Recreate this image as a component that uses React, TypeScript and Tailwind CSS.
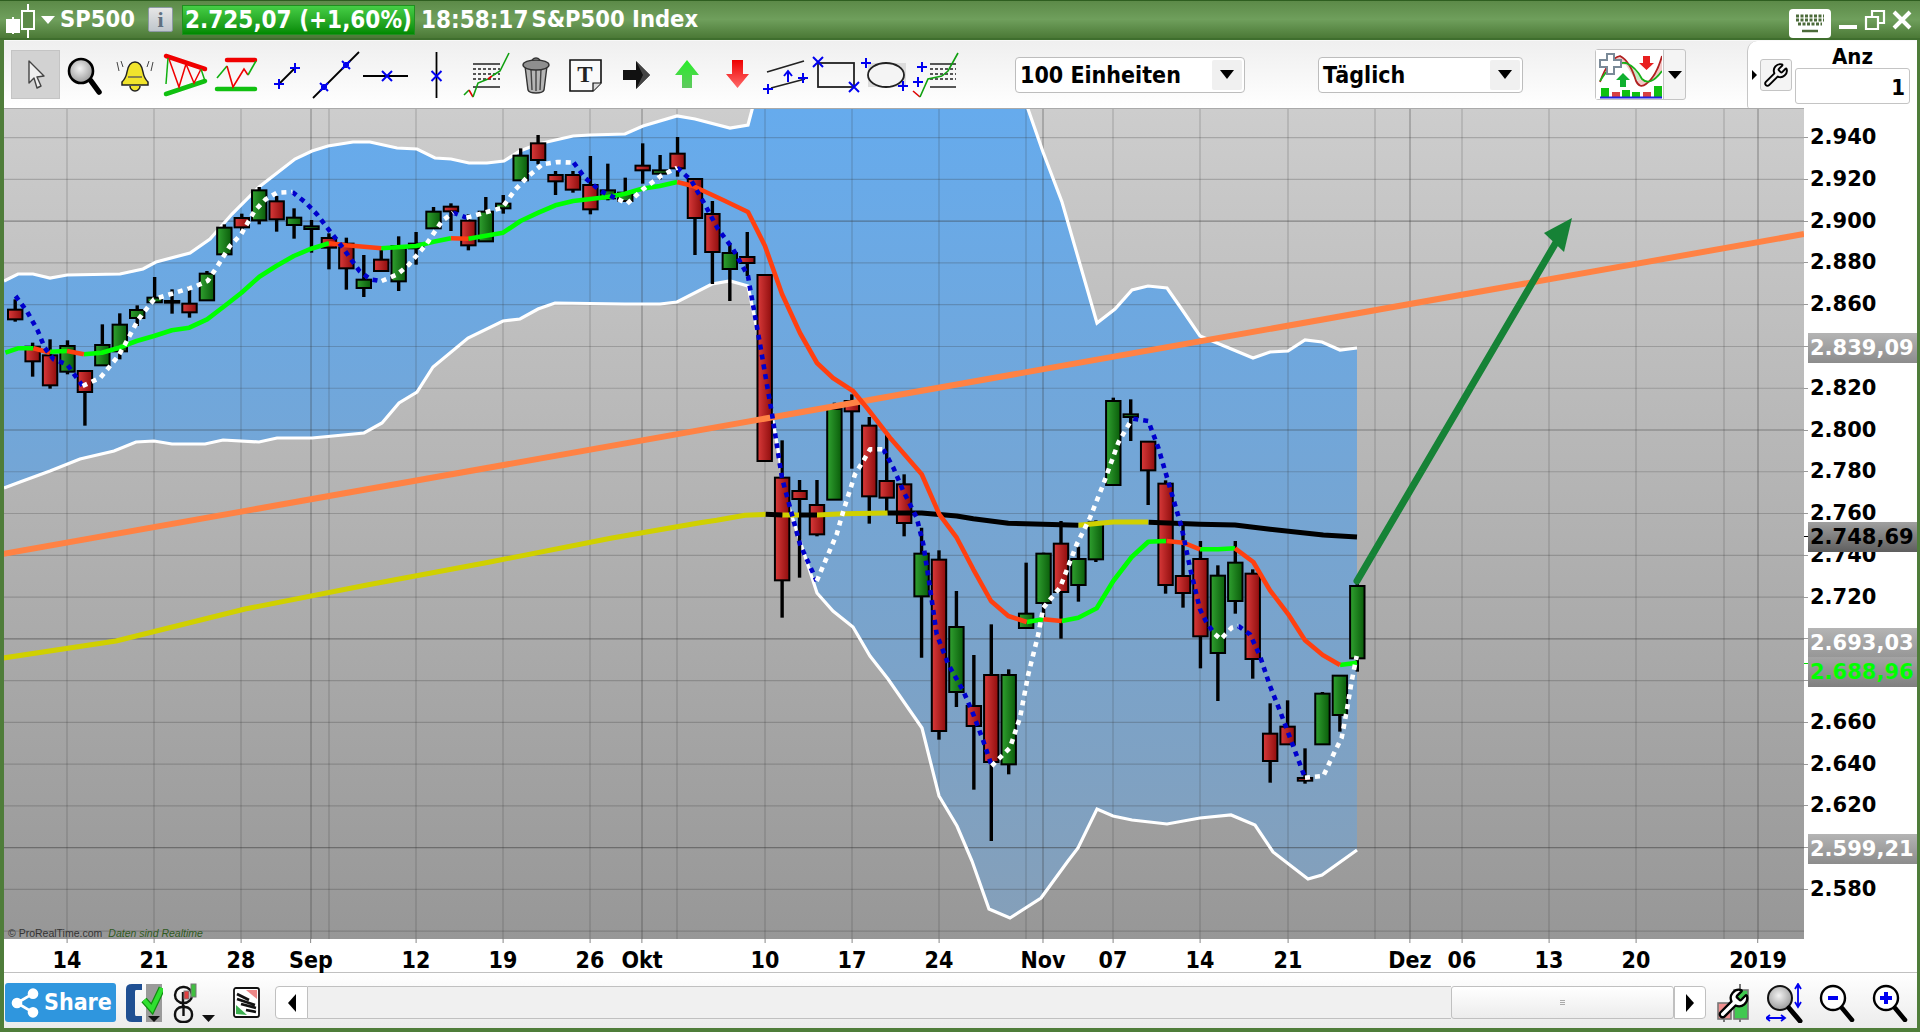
import { Share2, Wrench } from 'lucide-react';

const uiFont = "[font-family:'DejaVu_Sans_Condensed','DejaVu_Sans',sans-serif]";
const axisFont = "[font-family:'DejaVu_Sans',sans-serif]";

// price axis: 2.800 sits at y=321 inside the plot, 20 points = 41.76px
const priceY = (p: number) => 321 + ((2800 - p) * 41.76) / 20;

const x6 = (x: number) => +(x / 2.24).toFixed(1);
const pts6 = (a: number[]) => pairs(a, x6, (y) => 110 + y / 3);
const pts7 = (a: number[]) => pairs(a, (x) => 700 + x / 3, (y) => 380 + y / 3);
const pts8 = (a: number[]) => pairs(a, (x) => 1100 + x / 3, (y) => 380 + y / 3);
function pairs(a: number[], fx: (n: number) => number, fy: (n: number) => number) {
  const out: string[] = [];
  for (let i = 0; i < a.length; i += 2) out.push(`${+fx(a[i]).toFixed(1)},${+fy(a[i + 1]).toFixed(1)}`);
  return out.join(' ');
}

type C = [number, 'r' | 'g', number, number, number, number];
const scale = (rows: C[], base: number): C[] =>
  rows.map(([i, c, a, b, d, e]) => [i, c, base + a / 3, base + b / 3, base + d / 3, base + e / 3]);

const candles: C[] = [
  ...scale([
    [0, 'r', 565, 596, 625, 632], [1, 'r', 695, 707, 751, 797], [2, 'r', 685, 733, 823, 833], [3, 'g', 688, 705, 782, 790],
    [4, 'r', 780, 780, 843, 944], [5, 'g', 640, 702, 763, 765], [6, 'g', 607, 641, 721, 745], [7, 'g', 583, 597, 621, 645],
    [8, 'g', 498, 560, 574, 575], [9, 'g', 535, 570, 575, 608], [10, 'r', 525, 578, 604, 620], [11, 'g', 480, 488, 568, 570],
    [12, 'g', 340, 350, 430, 432], [13, 'r', 308, 321, 349, 362], [14, 'g', 228, 238, 328, 340], [15, 'r', 255, 271, 325, 362],
    [16, 'g', 292, 320, 342, 383], [17, 'g', 327, 346, 354, 425], [18, 'r', 367, 381, 410, 475], [19, 'r', 380, 398, 472, 536],
    [20, 'g', 432, 506, 531, 558], [21, 'r', 417, 446, 480, 482], [22, 'g', 376, 405, 511, 540], [23, 'g', 363, 398, 412, 461],
    [24, 'g', 288, 302, 352, 352], [25, 'r', 277, 287, 301, 360], [26, 'r', 310, 329, 403, 418], [27, 'g', 258, 302, 391, 392],
    [28, 'g', 252, 278, 292, 308], [29, 'g', 112, 134, 208, 208], [30, 'r', 72, 97, 147, 160], [31, 'r', 180, 192, 211, 252],
    [32, 'r', 180, 192, 236, 245], [33, 'r', 135, 222, 295, 310], [34, 'g', 158, 238, 262, 268], [35, 'g', 200, 245, 270, 272],
    [36, 'r', 97, 164, 178, 218], [37, 'g', 132, 178, 188, 205], [38, 'r', 78, 128, 172, 197],
  ], 110),
  [39, 'r', 178, 178, 217, 254], [40, 'r', 200, 213, 251, 283], [41, 'g', 242, 252, 268, 300], [42, 'r', 231, 256, 262, 275],
  ...scale([
    [43, 'r', -318, -318, 240, 240], [44, 'r', 178, 290, 598, 710], [45, 'r', 297, 330, 354, 590], [46, 'r', 297, 372, 460, 466],
    [47, 'g', 65, 84, 356, 356], [48, 'r', 40, 60, 91, 263], [49, 'r', 108, 134, 346, 428], [50, 'r', 160, 300, 350, 395],
    [51, 'r', 280, 310, 426, 466], [52, 'g', 440, 518, 646, 830], [53, 'r', 508, 536, 1050, 1076], [54, 'g', 630, 738, 933, 978],
    [55, 'r', 822, 975, 1035, 1226], [56, 'r', 730, 882, 1143, 1380], [57, 'g', 865, 882, 1150, 1180], [58, 'g', 545, 698, 741, 742],
    [59, 'g', 515, 518, 666, 710], [60, 'r', 420, 488, 633, 773], [61, 'g', 497, 534, 612, 662], [62, 'g', 418, 424, 535, 543],
    [63, 'g', 50, 60, 312, 312], [64, 'g', 55, 100, 108, 180], [65, 'r', 182, 182, 268, 372], [66, 'r', 298, 308, 612, 638],
    [67, 'r', 430, 585, 636, 680], [68, 'r', 480, 534, 766, 862], [69, 'g', 553, 584, 816, 960], [70, 'g', 480, 545, 660, 698],
    [71, 'r', 565, 578, 834, 893], [72, 'r', 967, 1058, 1140, 1205], [73, 'r', 958, 1037, 1090, 1090], [74, 'r', 1102, 1191, 1199, 1208],
    [75, 'g', 933, 938, 1090, 1090], [76, 'g', 884, 884, 1002, 1052], [77, 'g', 608, 615, 832, 872],
  ], 380),
];

const upperBand = '4,280 18,273 33,273 50,277 67,274 120,273 143,268 156,261 190,252 210,238 232,213 259,186 295,158 312,150 328,145 353,141 370,141 397,147 417,148 435,157 451,158 469,162 487,162 504,160 520,150 538,143 573,135 590,134 625,133 643,125 677,115 695,118 730,127 748,124 753,105 1027,105 1028,108 1043,151 1062,201 1097,322 1115,308 1132,289 1148,285 1167,287 1183,310 1200,335 1253,357 1270,351 1288,350 1305,339 1322,341 1340,349 1357,347';
const lowerBand = '4,487 20,481 50,470 80,458 114,450 136,441 154,440 172,443 205,443 223,439 259,441 277,437 312,437 364,432 382,422 399,402 417,391 433,366 468,337 503,320 520,318 538,308 555,302 625,303 660,303 677,301 712,283 730,280 748,285 760,343 773,420 787,500 817,592 833,610 853,626 870,655 888,678 922,727 939,795 957,825 972,860 989,908 1010,917 1041,897 1068,860 1078,847 1097,808 1113,815 1132,819 1167,823 1200,817 1231,814 1255,824 1273,851 1308,878 1322,874 1357,849';
const bandFill = `${upperBand} ${lowerBand.split(' ').reverse().join(' ')}`;

const maGreen = [
  pts6([12, 725, 40, 712, 75, 712]), pts6([112, 722, 150, 720]),
  pts6([188, 730, 228, 725, 267, 710, 306, 690, 345, 675, 385, 658, 424, 650, 464, 625, 503, 585, 541, 545, 581, 497, 619, 465, 658, 435, 697, 413, 737, 397]),
  pts6([854, 412, 932, 405, 971, 392, 1010, 382]),
  pts6([1049, 383, 1127, 365, 1166, 330, 1206, 305, 1244, 283, 1284, 270, 1361, 258, 1400, 248, 1438, 233, 1478, 225, 1517, 213]),
  pts7([980, 723, 1030, 715]),
  pts7([1085, 720, 1135, 710, 1190, 682, 1240, 600, 1295, 528, 1345, 482, 1398, 480]),
  pts8([300, 505, 354, 505, 405, 502]), pts8([720, 852, 771, 845]),
];
const maRed = [
  pts6([75, 712, 112, 725]), pts6([150, 720, 188, 730]), pts6([737, 397, 776, 403, 854, 412]), pts6([1010, 382, 1049, 383]),
  `${pts6([1517, 213])} 693,185 723,199 748,211 765,245 782,293 800,332 817,362 833,377 853,390 867,407 ${pts7([570, 170, 665, 280, 718, 400, 770, 470, 820, 565, 873, 660, 925, 705, 980, 723])}`,
  pts7([1030, 715, 1085, 720]),
  pts8([200, 480, 250, 485, 300, 505]),
  pts8([405, 502, 460, 543, 510, 628, 565, 700, 615, 778, 668, 822, 720, 852]),
];
const longYellow = [
  `3,657 116,640 245,608 367,584 490,561 612,537 ${pts7([0, 425, 50, 418, 135, 403, 197, 400])}`,
  pts7([247, 402, 297, 402]), pts7([351, 402, 430, 398, 563, 396]), pts7([1135, 433, 1240, 423, 1345, 423]),
];
const longBlack = [
  pts7([197, 400, 247, 402]), pts7([297, 402, 351, 402]),
  pts7([563, 396, 665, 396, 770, 405, 820, 413, 925, 427, 1030, 430, 1135, 433]),
  pts8([146, 424, 300, 430, 405, 432, 510, 445, 670, 462, 771, 468]),
];
const dashWhite = [
  pts6([185, 825, 225, 800, 265, 735, 280, 700, 310, 625, 345, 565, 385, 548, 410, 538, 440, 525, 465, 510, 485, 470, 515, 405, 540, 370, 570, 300, 595, 265, 620, 245, 655, 243]),
  pts6([855, 510, 890, 490, 915, 462, 955, 400, 990, 330, 1015, 305]),
  pts6([1045, 320, 1085, 305, 1125, 290, 1155, 235, 1180, 200, 1215, 160, 1250, 153, 1285, 155]),
  pts6([1385, 265, 1405, 278, 1440, 235, 1480, 195, 1517, 170]),
  pts7([350, 600, 380, 530, 410, 460, 430, 390, 465, 280, 490, 240, 510, 205, 550, 205]),
  pts7([875, 1155, 930, 1100, 960, 1010, 985, 880, 1015, 760, 1030, 680, 1080, 620, 1130, 490, 1170, 410, 1210, 310, 1255, 185, 1295, 115]),
  pts8([345, 760, 362, 775, 395, 740, 415, 735]),
  pts8([615, 1190, 670, 1185, 705, 1110, 725, 1070, 740, 990, 755, 900, 770, 825]),
];
const dashBlue = [
  pts6([35, 555, 60, 600, 85, 660, 100, 710, 120, 745, 150, 760, 185, 825]),
  pts6([655, 243, 685, 275, 710, 310, 730, 345, 765, 405, 805, 480, 830, 505, 850, 510]),
  pts6([1015, 305, 1045, 320]),
  pts6([1285, 155, 1310, 200, 1345, 240, 1385, 265]),
  `${pts6([1517, 170, 1548, 208])} 704,202 718,228 733,248 748,275 750,287 760,343 772,413 782,477 ${pts7([300, 490, 350, 600])}`,
  pts7([550, 205, 580, 260, 610, 330, 650, 410, 670, 490, 690, 620, 710, 760, 745, 850, 790, 930, 820, 1000, 850, 1080, 875, 1155]),
  pts8([100, 113, 145, 120, 175, 200, 210, 320, 245, 440, 270, 560, 300, 685, 320, 725, 345, 760]),
  pts8([415, 735, 450, 760, 480, 825, 510, 915, 540, 990, 570, 1070, 600, 1150, 615, 1190]),
];

const gridX = [67, 154, 241, 311, 329, 416, 503, 590, 642, 677, 765, 852, 939, 1026, 1043, 1113, 1200, 1288, 1375, 1410, 1462, 1549, 1636, 1724, 1758];
const monthX = [311, 642, 1043, 1410, 1758];
const prices = Array.from({ length: 21 }, (_, i) => 2540 + i * 20);
const axisPrices = prices.filter((p) => p >= 2580 && p <= 2940);
const dates: [string, number][] = [
  ['14', 67], ['21', 154], ['28', 241], ['Sep', 311], ['12', 416], ['19', 503], ['26', 590], ['Okt', 642], ['10', 765], ['17', 852],
  ['24', 939], ['Nov', 1043], ['07', 1113], ['14', 1200], ['21', 1288], ['Dez', 1410], ['06', 1462], ['13', 1549], ['20', 1636], ['2019', 1758],
];

function Lines({ items, stroke, width, dash, cap }: { items: string[]; stroke: string; width: number; dash?: string; cap?: 'round' }) {
  return (
    <>
      {items.map((p, i) => (
        <polyline key={i} points={p} fill="none" stroke={stroke} strokeWidth={width} strokeDasharray={dash} strokeLinejoin="round" strokeLinecap={cap} />
      ))}
    </>
  );
}

function Chart() {
  return (
    <svg viewBox="4 108 1800 831" className="block w-[1800px] h-[831px]">
      <defs>
        <linearGradient id="band" gradientUnits="userSpaceOnUse" x1="0" y1="108" x2="0" y2="939">
          <stop offset="0" stopColor="#66abed" />
          <stop offset="1" stopColor="#859fb8" />
        </linearGradient>
        <linearGradient id="red" x1="0" x2="1" y1="0" y2="0">
          <stop offset="0" stopColor="#d93a3a" />
          <stop offset="1" stopColor="#8f0d0d" />
        </linearGradient>
        <linearGradient id="green" x1="0" x2="1" y1="0" y2="0">
          <stop offset="0" stopColor="#30a130" />
          <stop offset="1" stopColor="#0a5c0a" />
        </linearGradient>
      </defs>
      <polygon points={bandFill} fill="url(#band)" />
      {gridX.map((x) => (
        <line key={x} x1={x} x2={x} y1={108} y2={939} stroke="#333" strokeOpacity={monthX.includes(x) ? 0.4 : 0.24} strokeWidth={1.2} />
      ))}
      {prices.map((p) => (
        <line key={p} x1={4} x2={1804} y1={priceY(p) + 108} y2={priceY(p) + 108} stroke="#333" strokeOpacity={p % 100 === 0 ? 0.45 : 0.24} strokeWidth={1.2} />
      ))}
      <polyline points={upperBand} fill="none" stroke="#fff" strokeWidth={3.2} />
      <polyline points={lowerBand} fill="none" stroke="#fff" strokeWidth={3.2} />
      {candles.map(([i, c, wt, bt, bb, wb]) => {
        const x = 15.2 + 17.43 * i;
        return (
          <g key={i}>
            <line x1={x} x2={x} y1={wt} y2={wb} stroke="#000" strokeWidth={3.4} />
            <rect x={x - 7.2} y={bt} width={14.4} height={bb - bt} fill={c === 'r' ? 'url(#red)' : 'url(#green)'} stroke="#000" strokeWidth={2} />
          </g>
        );
      })}
      <Lines items={longYellow} stroke="#d0d000" width={5} />
      <Lines items={longBlack} stroke="#000" width={5} />
      <line x1={3} y1={553} x2={1804} y2={233} stroke="#ff8244" strokeWidth={6} />
      <Lines items={maGreen} stroke="#00ff00" width={4.6} />
      <Lines items={maRed} stroke="#ff4010" width={4.6} />
      <Lines items={dashBlue} stroke="#0000cc" width={4.6} dash="5 5" />
      <Lines items={dashWhite} stroke="#fff" width={4.6} dash="5 5" />
      <line x1={1357} y1={580} x2={1558} y2={238} stroke="#168236" strokeWidth={7} strokeLinecap="round" />
      <polygon points="1572,217 1544,232 1564,251" fill="#168236" />
    </svg>
  );
}

function Plus({ x, y, r = 5 }: { x: number; y: number; r?: number }) {
  return <path d={`M${x - r} ${y}H${x + r}M${x} ${y - r}V${y + r}`} stroke="#0000f0" strokeWidth={2} fill="none" />;
}
function Cross({ x, y, r = 5 }: { x: number; y: number; r?: number }) {
  return <path d={`M${x - r} ${y - r}L${x + r} ${y + r}M${x - r} ${y + r}L${x + r} ${y - r}`} stroke="#0000f0" strokeWidth={2} fill="none" />;
}
function TableLines({ x, w }: { x: number; w: number }) {
  return (
    <g stroke="#222" strokeWidth={1.6}>
      <path d={`M${x} 14H${x + w}M${x} 37H${x + w}`} />
      <path d={`M${x} 19H${x + w}M${x} 24H${x + w}M${x} 29H${x + w}`} strokeDasharray="3 2" />
    </g>
  );
}
function Icon({ w, ml, children }: { w: number; ml: number; children: React.ReactNode }) {
  return (
    <svg viewBox={`0 0 ${w} 50`} width={w} height={50} style={{ marginLeft: ml }} className="shrink-0 overflow-visible">
      {children}
    </svg>
  );
}

function Glass({ r = 12, fill = 'url(#glass)' }: { r?: number; fill?: string }) {
  return <circle cx={14} cy={21} r={r} fill={fill} stroke="#000" strokeWidth={2.6} />;
}

function ToolIcons() {
  return (
    <>
      <svg width="0" height="0" className="absolute">
        <defs>
          <radialGradient id="glass" cx="0.45" cy="0.4" r="0.7">
            <stop offset="0" stopColor="#f2f2f2" />
            <stop offset="1" stopColor="#8d8d8d" />
          </radialGradient>
          <linearGradient id="upArrow" x1="0" x2="0" y1="0" y2="1">
            <stop offset="0" stopColor="#28ee28" />
            <stop offset="1" stopColor="#60c860" />
          </linearGradient>
          <linearGradient id="downArrow" x1="0" x2="0" y1="0" y2="1">
            <stop offset="0" stopColor="#ee0000" />
            <stop offset="1" stopColor="#ff6a6a" />
          </linearGradient>
        </defs>
      </svg>
      <Icon w={35} ml={7}>
        <Glass />
        <path d="M24 31L32 42" stroke="#000" strokeWidth={5.5} strokeLinecap="round" />
      </Icon>
      <Icon w={38} ml={14}>
        <path d="M19 12c-5 0-7 4-8 10-1 6-3 8-5 10v3h26v-3c-2-2-4-4-5-10-1-6-3-10-8-10z" fill="#f1e42c" stroke="#222" strokeWidth={1.5} />
        <path d="M14 36a5 5 0 0 0 10 0" fill="#f1e42c" stroke="#222" strokeWidth={1.5} />
        <path d="M12 27H26" stroke="#665" strokeWidth={1.5} />
        <path d="M1 12l2 9M5 11l2 6M37 12l-2 9M33 11l-2 6" stroke="#444" strokeWidth={1} fill="none" />
      </Icon>
      <Icon w={41} ml={11}>
        <path d="M1 6L40 19" stroke="#f00000" strokeWidth={4.5} strokeLinecap="round" />
        <path d="M1 44L40 31" stroke="#10c010" strokeWidth={4.5} strokeLinecap="round" />
        <path d="M1 34L3 8" stroke="#10b010" strokeWidth={1.5} />
        <path d="M4 9L14 37L21 14L29 33L36 19" stroke="#f00000" strokeWidth={1.5} fill="none" />
        <path d="M36 19L40 31" stroke="#10b010" strokeWidth={1.5} />
      </Icon>
      <Icon w={42} ml={9}>
        <path d="M12 10H40" stroke="#f00000" strokeWidth={4.5} strokeLinecap="round" />
        <path d="M2 39H40" stroke="#10c010" strokeWidth={4.5} strokeLinecap="round" />
        <path d="M2 28L12 16" stroke="#10b010" strokeWidth={1.6} fill="none" />
        <path d="M12 16L18 37L29 19L33 25" stroke="#f00000" strokeWidth={1.6} fill="none" />
        <path d="M33 25L41 11" stroke="#10b010" strokeWidth={1.6} fill="none" />
      </Icon>
      <Icon w={27} ml={16}>
        <path d="M6 34L22 18" stroke="#000" strokeWidth={1.8} />
        <Plus x={6} y={34} />
        <Plus x={22} y={18} />
      </Icon>
      <Icon w={46} ml={13}>
        <path d="M0 48L46 2" stroke="#000" strokeWidth={1.8} />
        <Cross x={11} y={37} r={4} />
        <Plus x={11} y={37} r={3} />
        <Cross x={33} y={15} r={4} />
        <Plus x={33} y={15} r={3} />
      </Icon>
      <Icon w={45} ml={4}>
        <path d="M0 26H45" stroke="#000" strokeWidth={1.8} />
        <Cross x={24} y={26} />
      </Icon>
      <Icon w={25} ml={16}>
        <path d="M12.500 2V48" stroke="#000" strokeWidth={1.8} />
        <Cross x={12.5} y={26} />
      </Icon>
      <Icon w={46} ml={14}>
        <TableLines x={10} w={27} />
        <path d="M1 45L6 40" stroke="#10a010" strokeWidth={1.6} fill="none" />
        <path d="M6 40L10 47" stroke="#e00000" strokeWidth={1.6} fill="none" />
        <path d="M10 47L15 33L25 29" stroke="#10a010" strokeWidth={1.6} fill="none" />
        <path d="M25 29L29 26" stroke="#e00000" strokeWidth={1.6} fill="none" />
        <path d="M29 26L37 21L46 3" stroke="#10a010" strokeWidth={1.6} fill="none" />
      </Icon>
      <Icon w={30} ml={12}>
        <path d="M4 16L7 40Q8 43 15 43Q22 43 23 40L26 16Z" fill="#b5b5b5" stroke="#333" strokeWidth={1.4} />
        <path d="M10 19L11 40M15 19V41M20 19L19 40" stroke="#444" strokeWidth={1.4} />
        <ellipse cx={15} cy={15} rx={13} ry={5} fill="#8f8f8f" stroke="#333" strokeWidth={1.4} />
        <path d="M11 10q4-4 8 0" fill="none" stroke="#333" strokeWidth={1.5} />
      </Icon>
      <Icon w={33} ml={18}>
        <path d="M1 10H32V33L24 41H1Z" fill="#fafafa" stroke="#111" strokeWidth={1.6} />
        <path d="M32 33H24V41" fill="#ddd" stroke="#111" strokeWidth={1.2} />
        <text x={16} y={32} textAnchor="middle" fontSize={23} fontWeight={700} fontFamily="'Liberation Serif', serif" fill="#222">T</text>
      </Icon>
      <Icon w={27} ml={21}>
        <path d="M0 20H13V11L27 25L13 39V30H0Z" fill="#111" />
        <path d="M13 11L27 25L13 39L20 25Z" fill="#444" />
      </Icon>
      <Icon w={24} ml={25}>
        <path d="M12 10L24 25H17V38H7V25H0Z" fill="url(#upArrow)" />
      </Icon>
      <Icon w={23} ml={27}>
        <path d="M6 10H17V24H23L11.500 38L0 24H6Z" fill="url(#downArrow)" />
      </Icon>
      <Icon w={47} ml={13}>
        <path d="M5 22L42 11M9 38L43 29" stroke="#222" strokeWidth={1.8} />
        <Plus x={6} y={39} />
        <Plus x={41} y={28} />
        <path d="M26 32V22M22 26L26 21L30 26" stroke="#0000f0" strokeWidth={2} fill="none" />
      </Icon>
      <Icon w={46} ml={4}>
        <rect x={5} y={13} width={36} height={24} fill="none" stroke="#222" strokeWidth={1.8} />
        <Cross x={5} y={12} />
        <Cross x={41} y={37} />
      </Icon>
      <Icon w={47} ml={3}>
        <rect x={6} y={13} width={38} height={24} fill="#dcdcdc" />
        <ellipse cx={24} cy={25} rx={18} ry={12} fill="#f4f4f4" stroke="#222" strokeWidth={1.8} />
        <Plus x={4} y={13} />
        <Plus x={41} y={36} />
      </Icon>
      <Icon w={45} ml={4}>
        <TableLines x={17} w={26} />
        <path d="M0 41L7 47" stroke="#e00000" strokeWidth={1.6} fill="none" />
        <path d="M7 47L15 29L29 26" stroke="#10a010" strokeWidth={1.6} fill="none" />
        <path d="M29 26L35 21L45 3" stroke="#10a010" strokeWidth={1.6} fill="none" />
        <Plus x={9} y={17} />
        <Plus x={5} y={32} />
      </Icon>
    </>
  );
}

function Select({ label, w, ml }: { label: string; w: number; ml: number }) {
  return (
    <div style={{ marginLeft: ml, width: w }} className="h-9 shrink-0 flex items-center bg-white border border-[#bdbdbd] rounded-[4px] pl-[4px] pr-[2px]">
      <span className={`${uiFont} font-bold text-[23px] leading-none text-black grow pt-[2px]`}>{label}</span>
      <span className="w-[30px] h-[30px] bg-[#f0f0f0] rounded-[2px] flex items-center justify-center">
        <span className="w-0 h-0 border-x-[7px] border-x-transparent border-t-[9px] border-t-black" />
      </span>
    </div>
  );
}

function Toolbar() {
  return (
    <div className="h-[68px] shrink-0 flex items-center bg-linear-to-b from-[#efefef] to-white relative border-t border-[#f8f8f8]">
      <div className="ml-[7px] w-[49px] h-[49px] shrink-0 bg-[#d2d2d2] border border-[#c4c4c4] flex items-center justify-center">
        <svg viewBox="0 0 20 32" width="20" height="32">
          <path d="M3 2V24L8 19L11 29L15 27L11 18L18 17Z" fill="#efefef" stroke="#444" strokeWidth={1.4} strokeLinejoin="round" />
        </svg>
      </div>
      <ToolIcons />
      <Select label="100 Einheiten" w={230} ml={57} />
      <Select label="Täglich" w={205} ml={73} />
      <div className="ml-[72px] w-[91px] h-[51px] shrink-0 flex bg-[#f4f4f4] border border-[#c4c4c4] rounded-[3px]">
        <div className="w-[68px] bg-white border-r border-[#c4c4c4] flex items-center justify-center">
          <svg viewBox="0 0 64 48" width="64" height="48">
            <path d="M2 31Q10 8 22 5Q32 10 38 30L28 14Q14 10 2 30Z" fill="#f3c8c8" />
            <path d="M38 30Q42 38 48 33Q58 26 64 5V20Q52 36 44 28Z" fill="#f3c8c8" />
            <path d="M30 14Q38 16 44 28L38 30Z" fill="#c4e8c4" />
            <path d="M2 31Q10 8 22 5Q32 10 38 30Q42 38 48 33Q58 26 64 5" fill="none" stroke="#b02020" strokeWidth={1.8} />
            <path d="M2 30Q14 10 28 12Q38 16 44 28Q52 36 64 20" fill="none" stroke="#18b018" strokeWidth={1.8} />
            <path d="M9 3H16V9H23V16H16V23H9V16H2V9H9Z" fill="#fff" stroke="#7a8a98" strokeWidth={2} />
            <path d="M45 5H52V12H56L48.500 19L41 12H45Z" fill="#e82020" />
            <path d="M25 22L32 29H28V36H22V29H18Z" fill="#10b030" />
            <path d="M3 37H11V46H3ZM24 39H32V46H24ZM34 41H42V46H34ZM56 35H64V46H56Z" fill="#10c010" />
            <path d="M14 41H22V46H14ZM45 41H53V46H45Z" fill="#d84040" />
            <path d="M2 46.500H64" stroke="#2020e0" strokeWidth={1.8} />
          </svg>
        </div>
        <div className="grow flex items-center justify-center">
          <span className="w-0 h-0 border-x-[7px] border-x-transparent border-t-[8px] border-t-black" />
        </div>
      </div>
      <div className="ml-[61px] w-[170px] h-[68px] shrink-0 bg-white rounded-tl-[10px] rounded-bl-[4px] border-l border-[#c6c6c6] flex items-center pl-[4px]">
        <span className="w-0 h-0 border-y-[5px] border-y-transparent border-l-[5px] border-l-black" />
        <span className="ml-[3px] w-8 h-8 bg-[#f4f4f4] border border-[#c4c4c4] rounded-[3px] flex items-center justify-center">
          <Wrench size={26} strokeWidth={1.8} className="text-black" />
        </span>
        <div className="ml-[3px] w-[115px] flex flex-col items-center">
          <span className={`${uiFont} font-bold text-[22px] leading-[22px] text-black`}>Anz</span>
          <div className={`${uiFont} font-bold text-[22px] leading-[38px] text-black w-full h-9 border border-[#c4c4c4] rounded-[3px] text-right pr-[4px]`}>1</div>
        </div>
      </div>
    </div>
  );
}

function TitleBar() {
  return (
    <div className={`h-10 shrink-0 flex items-center bg-linear-to-b from-[#5c8a48] via-[#6f9f5c] to-[#4b7936] border-t border-[#2e5e20] border-b-2 border-b-[#3f6e2e] relative ${uiFont} font-bold text-white`}>
      <svg viewBox="0 0 36 36" width="36" height="36" className="ml-[2px] shrink-0">
        <path d="M11 15V32M26 2V36" stroke="#fff" strokeWidth={2} />
        <rect x={4} y={17} width={14} height={14} fill="#fff" />
        <rect x={20} y={9} width={12} height={18} fill="#5c8a48" stroke="#fff" strokeWidth={2} />
      </svg>
      <span className="ml-[3px] w-0 h-0 border-x-[7px] border-x-transparent border-t-[8px] border-t-white" />
      <span className="ml-[5px] w-[88px] shrink-0 text-[23.5px] leading-none">SP500</span>
      <span className="w-[25px] h-[25px] shrink-0 rounded-[2px] bg-linear-to-b from-[#e6e6e6] to-[#bfc6cc] border border-[#8d9aa5] flex items-center justify-center text-[#5f7080] text-[22px] font-bold leading-none [font-family:'Liberation_Serif',serif]">i</span>
      <span className="ml-[9px] w-[233px] h-[30px] shrink-0 bg-linear-to-b from-[#45cf45] to-[#008a00] border border-[#1f8f1f] flex items-center justify-center text-[24px] leading-none whitespace-nowrap">2.725,07 (+1,60%)</span>
      <span className="ml-[6px] text-[24px] leading-none">18:58:17</span>
      <span className="ml-[3px] text-[23.5px] leading-none">S&amp;P500 Index</span>
      <div className="ml-auto flex items-center pr-[8px]">
        <div className="w-[42px] h-[29px] bg-white rounded-[4px] flex items-center justify-center mt-[8px]">
          <svg viewBox="0 0 34 22" width="34" height="22">
            <path d="M3 3h28M3 7h28M5 11h24" stroke="#4c6b3a" strokeWidth={3} strokeDasharray="3 1.500" />
            <path d="M9 18H25" stroke="#4c6b3a" strokeWidth={2.500} />
          </svg>
        </div>
        <svg viewBox="0 0 73 24" width="73" height="24" className="ml-[8px]">
          <path d="M0 19H18" stroke="#fff" strokeWidth={4} />
          <path d="M27 9H39V21H27ZM33 9V3H45V15H39" fill="none" stroke="#fff" strokeWidth={2.200} />
          <path d="M55 4L71 20M71 4L55 20" stroke="#fff" strokeWidth={4} />
        </svg>
      </div>
    </div>
  );
}

function Badge({ price, top, text, bg }: { price: string; top: number; text: string; bg: string }) {
  return (
    <div style={{ top }} className={`absolute left-[4px] right-0 h-[30px] flex items-center pl-[2px] text-[21px] font-bold leading-none ${axisFont} ${text} ${bg}`}>
      {price}
    </div>
  );
}

function PriceAxis() {
  return (
    <div className={`relative w-[113px] h-[831px] shrink-0 bg-white overflow-hidden ${axisFont}`}>
      {axisPrices.map((p) => (
        <div key={p} style={{ top: priceY(p) - 14 }} className="absolute left-0 flex items-center h-[30px]">
          <span className="w-[4px] h-px bg-[#999]" />
          <span className="ml-[2px] text-[21px] leading-none font-bold text-black">{`2.${p - 2000}`}</span>
        </div>
      ))}
      <Badge price="2.839,09" top={225} text="text-white" bg="bg-linear-to-b from-[#b4b4b4] to-[#8c8c8c]" />
      <Badge price="2.748,69" top={414} text="text-black" bg="bg-linear-to-b from-[#a0a0a0] to-[#5e5e5e]" />
      <Badge price="2.693,03" top={520} text="text-white" bg="bg-linear-to-b from-[#b4b4b4] to-[#969696]" />
      <Badge price="2.688,96" top={549} text="text-[#00ff00]" bg="bg-linear-to-b from-[#a4a4a4] to-[#808080]" />
      <Badge price="2.599,21" top={726} text="text-white" bg="bg-linear-to-b from-[#b4b4b4] to-[#8c8c8c]" />
      <span className="absolute left-0 top-[428px] w-[4px] h-px bg-black" />
      <span className="absolute left-0 top-[555px] w-[4px] h-px bg-[#00e000]" />
    </div>
  );
}

function DateAxis() {
  return (
    <div className={`relative h-[34px] shrink-0 bg-white border-b border-[#c0c0c0] ${uiFont}`}>
      {dates.map(([label, x]) => (
        <div key={`${label}${x}`} style={{ left: x - 4 }} className="absolute top-0 -translate-x-1/2 flex flex-col items-center">
          <span className="w-px h-[4px] bg-[#888]" />
          <span className="text-[23px] leading-[26px] mt-[4px] font-bold text-black">{label}</span>
        </div>
      ))}
    </div>
  );
}

function BottomBar() {
  return (
    <div className="h-[55px] shrink-0 flex items-center pt-[4px] bg-linear-to-b from-white to-[#ececec]">
      <div className={`ml-px w-[111px] h-[39px] shrink-0 rounded-[3px] bg-[#2f96de] flex items-center pl-[4px] text-white font-bold text-[23px] ${uiFont}`}>
        <Share2 size={32} fill="#fff" strokeWidth={2} className="shrink-0" />
        <span className="ml-[3px] leading-none">Share</span>
      </div>
      <svg viewBox="0 0 38 40" width="38" height="40" className="ml-[9px] shrink-0">
        <path d="M17 1H7Q1 1 1 6V34Q1 39 7 39H17V33H11Q10 33 10 31V9Q10 7 11 7H17Z" fill="#1f4f92" />
        <rect x={21} y={1} width={16} height={38} fill="#9a9a9a" />
        <path d="M19 17L27 26L37 5" fill="none" stroke="#108a10" strokeWidth={7} />
        <path d="M19 17L27 26L37 5" fill="none" stroke="#30e030" strokeWidth={4.5} />
        <path d="M23 33H35L29 39Z" fill="#111" />
      </svg>
      <svg viewBox="0 0 42 40" width="42" height="40" className="ml-[10px] shrink-0">
        <rect x={2} y={4} width={17} height={16} rx={8} fill="none" stroke="#111" strokeWidth={2.4} />
        <path d="M10 9V23" stroke="#111" strokeWidth={2.4} />
        <rect x={11} y={8} width={5} height={8} fill="#e04040" stroke="#777" />
        <rect x={18} y={1} width={5} height={13} fill="#40c040" stroke="#777" />
        <rect x={2} y={24} width={17} height={15} rx={7} fill="none" stroke="#111" strokeWidth={2.4} />
        <path d="M10.500 22V33" stroke="#111" strokeWidth={2.4} />
        <path d="M29 32H42L35.500 39Z" fill="#111" />
      </svg>
      <svg viewBox="0 0 27 31" width="27" height="31" className="ml-[18px] shrink-0">
        <rect x={1} y={1} width={25} height={29} rx={2} fill="#fff" stroke="#111" strokeWidth={1.8} />
        <path d="M13 3H24V12Z" fill="#e88" />
        <path d="M3 27L3 18L14 28Z" fill="#3cb050" />
        <path d="M4 7L16 13M4 12L22 18M8 17L23 21M13 23L23 25" stroke="#111" strokeWidth={2.8} />
      </svg>
      <div className="ml-[15px] w-[1431px] h-[33px] shrink-0 flex">
        <div className="w-[33px] h-full bg-white border border-[#c0c0c0] rounded-l-[4px] flex items-center justify-center">
          <span className="w-0 h-0 border-y-[9px] border-y-transparent border-r-[8px] border-r-black" />
        </div>
        <div className="grow h-full bg-[#f0f0f0] border-y border-[#c0c0c0]" />
        <div className="w-[223px] h-full bg-linear-to-b from-white to-[#ececec] border border-[#c0c0c0] rounded-[3px] flex items-center justify-center">
          <span className="w-[5px] h-[5px] border-y border-[#aaa] bg-[linear-gradient(#aaa,#aaa)] bg-[length:100%_1px] bg-center bg-no-repeat" />
        </div>
        <div className="w-[32px] h-full bg-white border border-[#c0c0c0] rounded-r-[4px] flex items-center justify-center">
          <span className="w-0 h-0 border-y-[9px] border-y-transparent border-l-[8px] border-l-black" />
        </div>
      </div>
      <div className="ml-[11px] relative w-8 h-[38px] shrink-0">
        <svg viewBox="0 0 32 38" width="32" height="38">
          <path d="M7 20V38M23 0V38" stroke="#777" strokeWidth={2} />
          <rect x={1} y={19} width={13} height={16} fill="#f09090" stroke="#777" strokeWidth={1.6} />
          <rect x={17} y={6} width={14} height={29} fill="#40c850" stroke="#777" strokeWidth={1.6} />
        </svg>
        <Wrench size={33} fill="#fff" strokeWidth={1.7} className="absolute left-0 top-[3px] text-black" />
      </div>
      <svg viewBox="0 0 38 40" width="38" height="40" className="ml-[17px] shrink-0">
        <circle cx={14} cy={15} r={12} fill="url(#glass)" stroke="#111" strokeWidth={2} />
        <path d="M23 25L34 38" stroke="#000" strokeWidth={5} strokeLinecap="round" />
        <path d="M32 3V22M29 6L32 1L35 6M29 19L32 24L35 19M1 35H18M4 32L0 35L4 38M15 32L19 35L15 38" fill="none" stroke="#0000f0" strokeWidth={1.8} />
      </svg>
      <svg viewBox="0 0 36 38" width="36" height="38" className="ml-[15px] shrink-0">
        <circle cx={14} cy={14} r={12} fill="#fff" stroke="#000" strokeWidth={2.4} />
        <path d="M9 14H19" stroke="#0000f0" strokeWidth={4} />
        <path d="M23 24L33 36" stroke="#000" strokeWidth={4.6} strokeLinecap="round" />
      </svg>
      <svg viewBox="0 0 36 38" width="36" height="38" className="ml-[17px] shrink-0">
        <circle cx={14} cy={14} r={12} fill="#fff" stroke="#000" strokeWidth={2.4} />
        <path d="M8 14H20M14 8V20" stroke="#0000f0" strokeWidth={4} />
        <path d="M23 24L33 36" stroke="#000" strokeWidth={4.6} strokeLinecap="round" />
      </svg>
    </div>
  );
}

export default function App() {
  return (
    <div className="w-[1920px] h-[1032px] flex flex-col overflow-hidden bg-[#4f7d3a]">
      <TitleBar />
      <div className="grow flex flex-col ml-[4px] mr-[3px] mb-[4px] bg-white min-h-0">
        <Toolbar />
        <div className="h-[831px] shrink-0 flex">
          <div className="relative w-[1800px] h-[831px] shrink-0 bg-linear-to-b from-[#cdcdcd] to-[#979797] border-t border-[#aaa]">
            <Chart />
            <span className="absolute left-[4px] bottom-[1px] text-[10.5px] leading-none text-[#333] whitespace-nowrap [font-family:'Liberation_Sans',sans-serif]">
              © ProRealTime.com
              <i className="ml-[6px] text-[#2f5a1e]">Daten sind Realtime</i>
            </span>
          </div>
          <PriceAxis />
        </div>
        <DateAxis />
        <BottomBar />
      </div>
    </div>
  );
}
